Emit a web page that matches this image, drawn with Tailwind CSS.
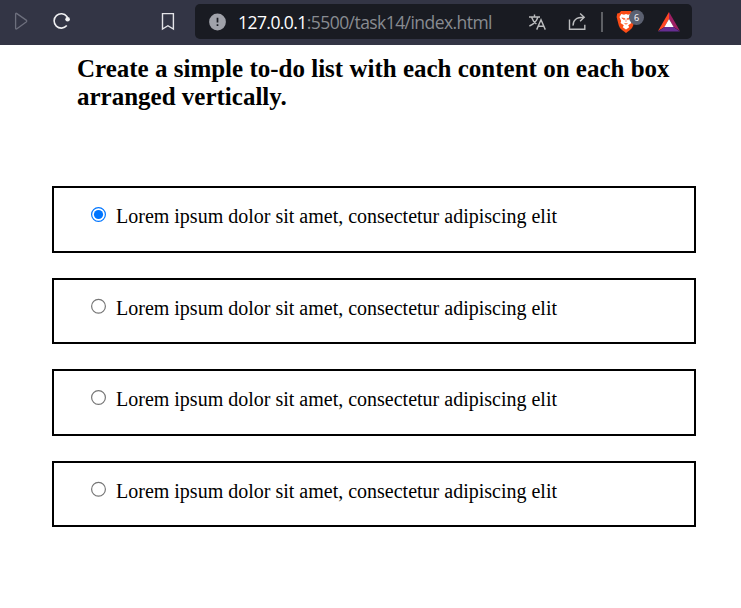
<!DOCTYPE html>
<html lang="en">
<head>
<meta charset="utf-8">
<title>To-do list</title>
<script src="https://cdn.jsdelivr.net/npm/@tailwindcss/browser@4"></script>
</head>
<body class="w-[741px] h-[608px] overflow-hidden bg-white text-black font-['Liberation_Serif',serif]">
<header class="flex h-[45px] items-start bg-[#333545] pt-1 font-['Open_Sans',sans-serif]">
  <svg class="ml-3 mt-[7px] h-5 w-5 shrink-0" viewBox="0 0 20 20" fill="none" stroke="#6d6f7d" stroke-width="1.3" stroke-linejoin="round"><path d="M3.6 3.2Q3.6 1.7 4.9 2.6L14.2 9.1Q15.3 10 14.2 10.9L4.9 17.7Q3.6 18.5 3.6 17Z"/></svg>
  <svg class="ml-5 mt-[7px] h-5 w-5 shrink-0" viewBox="0 0 20 20" fill="none" stroke="#efeff1" stroke-width="1.6"><path d="M14.8 14.6A7.2 7.2 0 1 1 14.9 5.4L15.6 7.5"/><circle cx="15.6" cy="8.3" r="2.3" fill="#efeff1" stroke="none"/></svg>
  <svg class="ml-[86px] mt-[7px] h-5 w-5 shrink-0" viewBox="0 0 20 20" fill="none" stroke="#e4e4e8" stroke-width="1.4"><path d="M4.5 2.6H15.4V18L9.9 14.7L4.5 18Z"/></svg>
  <div class="ml-[17px] flex h-[35px] w-[497px] items-center rounded-[5px] bg-[#191b22]">
    <svg class="ml-[14px] h-[18px] w-[18px] shrink-0" viewBox="0 0 18 18"><circle cx="8.5" cy="9" r="8.4" fill="#a0a2aa"/><path d="M8.5 4.7V9.6M8.5 11.2V13" stroke="#191b22" stroke-width="1.7"/></svg>
    <div class="ml-[11px] w-[290px] whitespace-nowrap text-[17.5px] leading-[24px] tracking-[-0.56px] text-[#888b91]"><span class="text-white">127.0.0.1</span>:5500/task14/index.html</div>
    <svg class="h-[20px] w-[20px] shrink-0" viewBox="0 0 20 20" fill="none" stroke="#bcbdbf" stroke-width="1.4"><path d="M1 5H12M6.5 2.4V5M9.8 5.2C8.7 9 5.5 12.2 1.4 14M3.6 5.2C4.7 8.5 6.5 10.6 8.4 12M8.7 17.6L13 7.8L17.3 17.6M10.2 14.2H15.8"/></svg>
    <svg class="ml-5 h-[20px] w-[20px] shrink-0" viewBox="0 0 20 20" fill="none" stroke="#bcbdbf" stroke-width="1.4"><path d="M1.5 7.5V17.2H16.8V12.8M5.1 13.6C4.9 8.2 8 5.3 16 5.3M12.1 1.4L16.2 5.3L12.1 9.2"/></svg>
    <div class="ml-[13px] h-5 w-[2px] bg-[#5e6065]"></div>
    <div class="relative ml-[13px] h-[26px] w-[28px]">
      <svg class="h-[26px] w-[20px]" viewBox="0 0 20 26"><path d="M5 2H15L16.4 4L18.4 4.2L19 8L17.2 16.5Q16.4 19.3 14 21L10 24L6 21Q3.6 19.3 2.8 16.5L.6 8L1.2 4.5L3.4 4Z" fill="#fb4c16"/><path d="M5.3 5L8 5.7L10 5L12 5.7L14.7 5L16.5 8L14.9 12L15.4 14L12.2 16.3L13.2 18.3L10 20.5L6.8 18.3L7.8 16.3L4.6 14L5.1 12L3.5 8Z" fill="#fff"/><path d="M5.8 8.9L9 9.7L8.2 10.7ZM14.2 8.9L11 9.7L11.8 10.7ZM10 10.2V13M8.4 14.4L10 15.2L11.6 14.4" fill="#fb4c16" stroke="#fb4c16" stroke-width=".6"/></svg>
      <div class="absolute left-[13px] top-[1px] flex h-[15px] w-[15px] items-center justify-center rounded-full bg-[#5b6070] text-[9px] leading-none text-white">6</div>
    </div>
    <svg class="ml-[13px] h-[22px] w-[24px] shrink-0" viewBox="0 0 24 22"><path d="M12 1L1 20L7.5 16L12 8Z" fill="#ff4724"/><path d="M12 1L23 20L16.5 16L12 8Z" fill="#9e1f63"/><path d="M1 20.5H23L16.5 16H7.5Z" fill="#662d91"/><path d="M12 8L16.6 16H7.4Z" fill="#fff"/></svg>
  </div>
</header>
<main class="pl-[52px]">
  <h1 class="ml-[25px] mt-[10px] h-[131px] whitespace-nowrap text-[25px] font-bold leading-[28px]">Create a simple to-do list with each content on each box<br>arranged vertically.</h1>
  <ul class="w-[644px]">
    <li class="mb-[25px] flex h-[67px] border-2 border-black pl-[37px]">
      <svg class="mt-[18px] h-4 w-4" viewBox="0 0 16 16"><circle cx="7.5" cy="8.5" r="6.9" fill="#fff" stroke="#0075ff" stroke-width="1.2"/><circle cx="7.5" cy="8.5" r="4.6" fill="#0075ff"/></svg>
      <span class="ml-[9px] mt-[16px] whitespace-nowrap text-[20px] leading-[24px]">Lorem ipsum dolor sit amet, consectetur adipiscing elit</span>
    </li>
    <li class="mb-[25px] flex h-[66px] border-2 border-black pl-[37px]">
      <svg class="mt-[18px] h-4 w-4" viewBox="0 0 16 16"><circle cx="7.5" cy="8.2" r="6.9" fill="#fff" stroke="#767676" stroke-width="1.2"/></svg>
      <span class="ml-[9px] mt-[16px] whitespace-nowrap text-[20px] leading-[24px]">Lorem ipsum dolor sit amet, consectetur adipiscing elit</span>
    </li>
    <li class="mb-[25px] flex h-[67px] border-2 border-black pl-[37px]">
      <svg class="mt-[18px] h-4 w-4" viewBox="0 0 16 16"><circle cx="7.5" cy="8.5" r="6.9" fill="#fff" stroke="#767676" stroke-width="1.2"/></svg>
      <span class="ml-[9px] mt-[16px] whitespace-nowrap text-[20px] leading-[24px]">Lorem ipsum dolor sit amet, consectetur adipiscing elit</span>
    </li>
    <li class="flex h-[66px] border-2 border-black pl-[37px]">
      <svg class="mt-[18px] h-4 w-4" viewBox="0 0 16 16"><circle cx="7.5" cy="8.2" r="6.9" fill="#fff" stroke="#767676" stroke-width="1.2"/></svg>
      <span class="ml-[9px] mt-[16px] whitespace-nowrap text-[20px] leading-[24px]">Lorem ipsum dolor sit amet, consectetur adipiscing elit</span>
    </li>
  </ul>
</main>
</body>
</html>
